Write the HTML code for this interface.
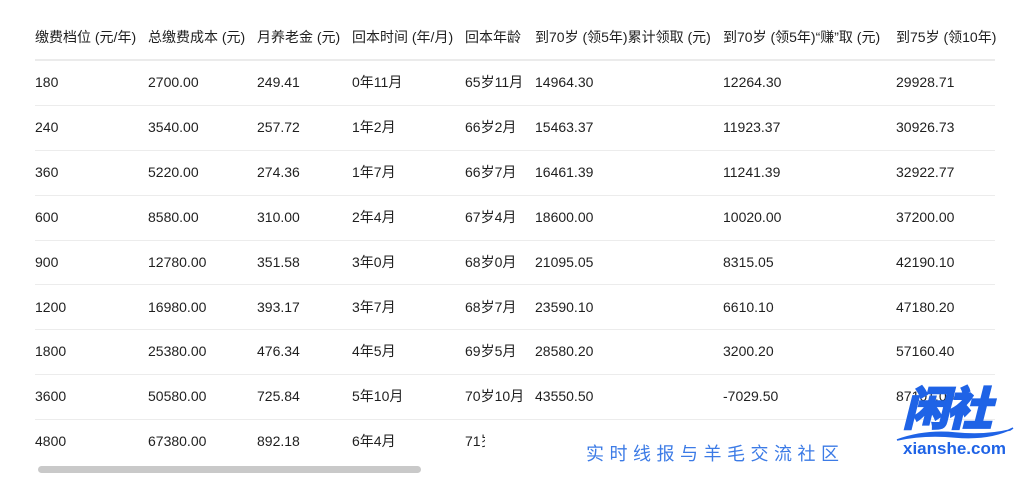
<!DOCTYPE html>
<html><head><meta charset="utf-8"><style>
html,body{margin:0;padding:0;background:#fff;width:1032px;height:483px;overflow:hidden;position:relative;
font-family:"Liberation Sans","Noto Sans CJK SC",sans-serif;color:#1f1f1f;font-size:14px}
.t{position:absolute;white-space:nowrap;line-height:16px}
.h{position:absolute;left:35px;width:960px;height:2px;background:#ebebeb}
.l{position:absolute;left:35px;width:960px;height:1px;background:#ececec}
</style></head><body>
<div id="c"></div>
<div class="h" style="top:59px"></div>
<script>
var xs=[35,148,257,352,465,535,723,896];
var hd=["缴费档位 (元/年)","总缴费成本 (元)","月养老金 (元)","回本时间 (年/月)","回本年龄","到70岁 (领5年)累计领取 (元)","到70岁 (领5年)“赚”取 (元)","到75岁 (领10年)"];
var rows=[
["180","2700.00","249.41","0年11月","65岁11月","14964.30","12264.30","29928.71"],
["240","3540.00","257.72","1年2月","66岁2月","15463.37","11923.37","30926.73"],
["360","5220.00","274.36","1年7月","66岁7月","16461.39","11241.39","32922.77"],
["600","8580.00","310.00","2年4月","67岁4月","18600.00","10020.00","37200.00"],
["900","12780.00","351.58","3年0月","68岁0月","21095.05","8315.05","42190.10"],
["1200","16980.00","393.17","3年7月","68岁7月","23590.10","6610.10","47180.20"],
["1800","25380.00","476.34","4年5月","69岁5月","28580.20","3200.20","57160.40"],
["3600","50580.00","725.84","5年10月","70岁10月","43550.50","-7029.50","87101.00"],
["4800","67380.00","892.18","6年4月","71岁4月","","",""]];
var h="";
for(var i=0;i<8;i++)h+='<div class="t" style="left:'+xs[i]+'px;top:29px">'+hd[i]+'</div>';
for(var r=0;r<rows.length;r++){var y=74+r*44.9;
for(var i=0;i<8;i++)h+='<div class="t" style="left:'+xs[i]+'px;top:'+y+'px">'+rows[r][i]+'</div>';
if(r<8)h+='<div class="l" style="top:'+(105+r*44.85)+'px"></div>';}
document.getElementById("c").innerHTML=h;
</script>
<div style="position:absolute;left:485px;top:428px;width:520px;height:30px;background:#fff"></div>
<div style="position:absolute;left:38px;top:466px;width:383px;height:7px;border-radius:4px;background:#c9c9c9"></div>
<div class="t" style="left:586px;top:444px;font-size:18px;line-height:20px;color:#3c7be6;letter-spacing:5.5px">实时线报与羊毛交流社区</div>
<div style="position:absolute;left:895px;top:380px;width:137px;height:80px">
<div class="t" style="left:8px;top:4px;font-size:46px;line-height:50px;font-weight:900;font-style:italic;color:#1f63e6;letter-spacing:-3px;-webkit-text-stroke:1.5px #1f63e6">闲社</div>
<svg style="position:absolute;left:0;top:44px" width="137" height="20"><path d="M2 16 Q30 6 60 9 Q90 12 115 6 L118 4 Q95 16 60 13 Q30 10 2 16Z" fill="#1f63e6" stroke="#1f63e6" stroke-width="1.5"/></svg>
<div class="t" style="left:8px;top:60px;font-size:17px;line-height:18px;font-weight:bold;color:#1f63e6">xianshe.com</div>
</div>
</body></html>
